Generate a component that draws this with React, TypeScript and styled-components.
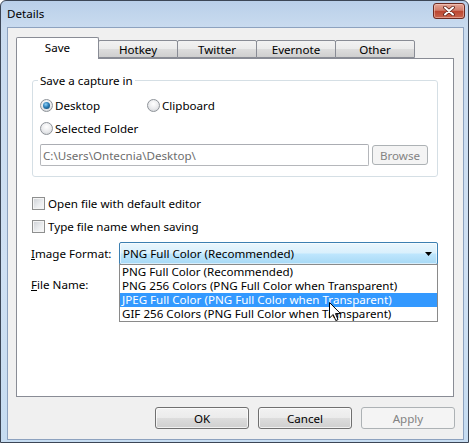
import React from "react";
import styled, { createGlobalStyle } from "styled-components";

const Global = createGlobalStyle`
  html, body { margin: 0; padding: 0; background: #ffffff; }
  body { font-family: "Noto Sans", "Open Sans", sans-serif; font-size: 11.6px; color: #000; }
  * { box-sizing: border-box; }
`;

const Window = styled.div`
  width: 469px;
  height: 443px;
  display: flex;
  flex-direction: column;
  background: linear-gradient(#b9cfe9 0px, #c9dbef 26px, #cfe0f3 60%, #c6dcf1 100%);
  border: 1px solid #3c4656;
  border-radius: 6px 6px 0 0;
  overflow: hidden;
`;

const TitleBar = styled.div`
  height: 26px;
  flex: none;
  display: flex;
  justify-content: space-between;
  align-items: flex-start;
  padding: 0 3px 0 6px;
`;

const TitleText = styled.span`
  line-height: 26px;
  color: #000;
`;

const CloseButton = styled.div`
  margin-top: 2px;
  width: 32px;
  height: 16px;
  border: 1px solid #6b2a22;
  border-radius: 3px;
  background: linear-gradient(#e4a697 0%, #d17d6b 45%, #bb4631 52%, #c9664f 100%);
  box-shadow: inset 0 0 0 1px rgba(255, 220, 210, 0.45);
  display: flex;
  align-items: center;
  justify-content: center;
`;

const Client = styled.div`
  flex: 1;
  margin: 0 4px 2px 6px;
  border: 1px solid #8da2bf;
  background: #f0f0f0;
  display: flex;
  flex-direction: column;
  padding: 9px 9px 10px 8px;
  min-height: 0;
`;

const TabStrip = styled.div`
  height: 22px;
  flex: none;
  display: flex;
  align-items: flex-start;
  margin-bottom: -1px;
  position: relative;
  z-index: 1;
`;

const Tab = styled.div<{ $active?: boolean; $w: number }>`
  width: ${(p) => p.$w}px;
  margin-left: ${(p) => (p.$active ? 0 : -1)}px;
  height: ${(p) => (p.$active ? 22 : 18)}px;
  margin-top: ${(p) => (p.$active ? 0 : 3)}px;
  border: 1px solid #898c95;
  border-bottom: ${(p) => (p.$active ? "none" : "1px solid #898c95")};
  border-radius: 2px 2px 0 0;
  background: ${(p) =>
    p.$active
      ? "#ffffff"
      : "linear-gradient(#f2f2f2 0%, #ebebeb 50%, #dddddd 51%, #cfcfcf 100%)"};
  display: flex;
  align-items: center;
  justify-content: center;
  line-height: 15px;
  padding-bottom: ${(p) => (p.$active ? 3 : 0)}px;
  position: relative;
  z-index: ${(p) => (p.$active ? 2 : 1)};
`;

const Panel = styled.div`
  flex: 1;
  border: 1px solid #898c95;
  background: #ffffff;
  padding: 14px 15px 0 15px;
  display: flex;
  flex-direction: column;
`;

const GroupBox = styled.fieldset`
  margin: 0;
  width: 406px;
  border: 1px solid #d5dfe5;
  border-radius: 3px;
  padding: 10px 9px 10px 7px;
  min-inline-size: 0;
`;

const Legend = styled.legend`
  padding: 0 2px;
  margin-left: -2px;
  line-height: 15px;
`;

const Stack = styled.div<{ $gap: number }>`
  display: flex;
  flex-direction: column;
  gap: ${(p) => p.$gap}px;
`;

const RadioRow = styled.div`
  display: flex;
  height: 15px;
  align-items: center;
`;

const RadioItem = styled.label<{ $w?: number }>`
  display: flex;
  align-items: center;
  width: ${(p) => (p.$w ? `${p.$w}px` : "auto")};
  line-height: 15px;
`;

const RadioCircle = styled.span<{ $on?: boolean }>`
  width: 13px;
  height: 13px;
  border-radius: 50%;
  border: 1px solid #8e9399;
  background: radial-gradient(circle at 50% 35%, #ffffff 0%, #e9eaec 55%, #c9ccd1 100%);
  margin-right: 2px;
  display: flex;
  align-items: center;
  justify-content: center;
  flex: none;
  &::after {
    content: "";
    display: ${(p) => (p.$on ? "block" : "none")};
    width: 7px;
    height: 7px;
    border-radius: 50%;
    background: radial-gradient(circle at 40% 35%, #8fd0f5 0%, #2b7db7 45%, #0d3c5e 100%);
  }
`;

const PathRow = styled.div`
  display: flex;
  align-items: center;
  gap: 3px;
`;

const PathField = styled.div`
  width: 329px;
  height: 22px;
  border: 1px solid #b5b7bb;
  border-top-color: #abadb3;
  border-radius: 2px;
  background: #ffffff;
  color: #6d6d6d;
  padding-left: 2px;
  display: flex;
  align-items: center;
  line-height: 15px;
`;

const Button = styled.div<{ $disabled?: boolean; $w: number; $h: number }>`
  width: ${(p) => p.$w}px;
  height: ${(p) => p.$h}px;
  border: 1px solid ${(p) => (p.$disabled ? "#adb2b5" : "#707070")};
  border-radius: 3px;
  background: ${(p) =>
    p.$disabled
      ? "#f4f4f4"
      : "linear-gradient(#f2f2f2 0%, #ebebeb 50%, #dddddd 51%, #cfcfcf 100%)"};
  box-shadow: inset 0 0 0 1px ${(p) => (p.$disabled ? "#f4f4f4" : "rgba(255,255,255,0.7)")};
  color: ${(p) => (p.$disabled ? "#838383" : "#000")};
  display: flex;
  align-items: center;
  justify-content: center;
  line-height: 15px;
  flex: none;
`;

const Options = styled.div`
  margin-top: 19px;
  display: flex;
  flex-direction: column;
  gap: 8px;
`;

const CheckRow = styled.label`
  display: flex;
  align-items: center;
  height: 15px;
  line-height: 15px;
`;

const CheckBox = styled.span`
  width: 13px;
  height: 13px;
  border: 1px solid #8e8f8f;
  background: linear-gradient(135deg, #cdd0d5 0%, #eceef0 60%, #f8f8f8 100%);
  box-shadow: inset 0 0 0 1px #f4f4f4;
  margin-right: 3px;
  flex: none;
`;

const FormRow = styled.div`
  display: flex;
  align-items: center;
  height: 23px;
  margin-left: -1px;
`;

const FieldLabel = styled.span`
  width: 88px;
  line-height: 15px;
  flex: none;
`;

const Combo = styled.div`
  position: relative;
  width: 319px;
  height: 23px;
  border: 1px solid #3c7fb1;
  border-radius: 2px;
  background: linear-gradient(#eaf6fd 0%, #d9f0fc 48%, #bee6fd 52%, #a7d9f5 100%);
  box-shadow: inset 0 0 0 1px rgba(255, 255, 255, 0.55);
  display: flex;
  align-items: center;
  justify-content: space-between;
  padding: 0 5px 0 3px;
  line-height: 15px;
`;

const DropList = styled.div`
  position: absolute;
  top: 100%;
  left: -1px;
  width: 319px;
  border: 1px solid #8a8a8a;
  background: #ffffff;
  z-index: 5;
`;

const DropItem = styled.div<{ $sel?: boolean }>`
  height: 14px;
  line-height: 14px;
  padding-left: 2px;
  white-space: nowrap;
  overflow: hidden;
  background: ${(p) => (p.$sel ? "#3399ff" : "transparent")};
  color: ${(p) => (p.$sel ? "#ffffff" : "#000")};
`;

const Cursor = styled.svg`
  position: absolute;
  left: 209px;
  top: 37px;
  pointer-events: none;
`;

const HiddenField = styled.div`
  width: 319px;
  height: 21px;
  border: 1px solid #abadb3;
  background: #fff;
`;

const ButtonRow = styled.div`
  display: flex;
  justify-content: flex-end;
  gap: 9px;
  margin-top: 10px;
  margin-right: -1px;
  flex: none;
`;

const tabs: { label: string; w: number; active?: boolean }[] = [
  { label: "Save", w: 83, active: true },
  { label: "Hotkey", w: 80 },
  { label: "Twitter", w: 80 },
  { label: "Evernote", w: 80 },
  { label: "Other", w: 80 },
];

const formats = [
  "PNG Full Color (Recommended)",
  "PNG 256 Colors (PNG Full Color when Transparent)",
  "JPEG Full Color (PNG Full Color when Transparent)",
  "GIF 256 Colors (PNG Full Color when Transparent)",
];

export default function App() {
  return (
    <>
      <Global />
      <Window>
        <TitleBar>
          <TitleText>Details</TitleText>
          <CloseButton>
            <svg width="12" height="10" viewBox="0 0 12 10">
              <path d="M2 1.5 L10 8.5 M10 1.5 L2 8.5" stroke="#5a2018" strokeWidth="3.6" strokeLinecap="round" />
              <path d="M2 1.5 L10 8.5 M10 1.5 L2 8.5" stroke="#ffffff" strokeWidth="2" strokeLinecap="round" />
            </svg>
          </CloseButton>
        </TitleBar>
        <Client>
          <TabStrip>
            {tabs.map((t) => (
              <Tab key={t.label} $active={t.active} $w={t.w}>
                {t.label}
              </Tab>
            ))}
          </TabStrip>
          <Panel>
            <GroupBox>
              <Legend>Save a capture in</Legend>
              <Stack $gap={8}>
                <RadioRow>
                  <RadioItem $w={107}>
                    <RadioCircle $on />
                    Desktop
                  </RadioItem>
                  <RadioItem>
                    <RadioCircle />
                    Clipboard
                  </RadioItem>
                </RadioRow>
                <RadioRow>
                  <RadioItem>
                    <RadioCircle />
                    Selected Folder
                  </RadioItem>
                </RadioRow>
                <PathRow>
                  <PathField>C:\Users\Ontecnia\Desktop\</PathField>
                  <Button $disabled $w={56} $h={20}>
                    Browse
                  </Button>
                </PathRow>
              </Stack>
            </GroupBox>
            <Options>
              <CheckRow>
                <CheckBox />
                Open file with default editor
              </CheckRow>
              <CheckRow>
                <CheckBox />
                Type file name when saving
              </CheckRow>
              <FormRow>
                <FieldLabel>
                  <u>I</u>mage Format:
                </FieldLabel>
                <Combo>
                  <span>{formats[0]}</span>
                  <svg width="7" height="4" viewBox="0 0 7 4">
                    <path d="M0 0 H7 L3.5 4 Z" fill="#000" />
                  </svg>
                  <DropList>
                    {formats.map((f, i) => (
                      <DropItem key={f} $sel={i === 2}>
                        {f}
                      </DropItem>
                    ))}
                    <Cursor width="13" height="20" viewBox="0 0 13 20">
                      <path
                        d="M0.5 0.5 L0.5 16 L4.2 12.5 L6.8 18.6 L9 17.6 L6.5 11.6 L11.5 11.6 Z"
                        fill="#ffffff"
                        stroke="#000"
                        strokeWidth="1"
                        strokeLinejoin="round"
                      />
                    </Cursor>
                  </DropList>
                </Combo>
              </FormRow>
              <FormRow>
                <FieldLabel>
                  <u>F</u>ile Name:
                </FieldLabel>
                <HiddenField />
              </FormRow>
            </Options>
          </Panel>
          <ButtonRow>
            <Button $w={94} $h={22}>OK</Button>
            <Button $w={94} $h={22}>Cancel</Button>
            <Button $w={94} $h={22} $disabled>
              Apply
            </Button>
          </ButtonRow>
        </Client>
      </Window>
    </>
  );
}
